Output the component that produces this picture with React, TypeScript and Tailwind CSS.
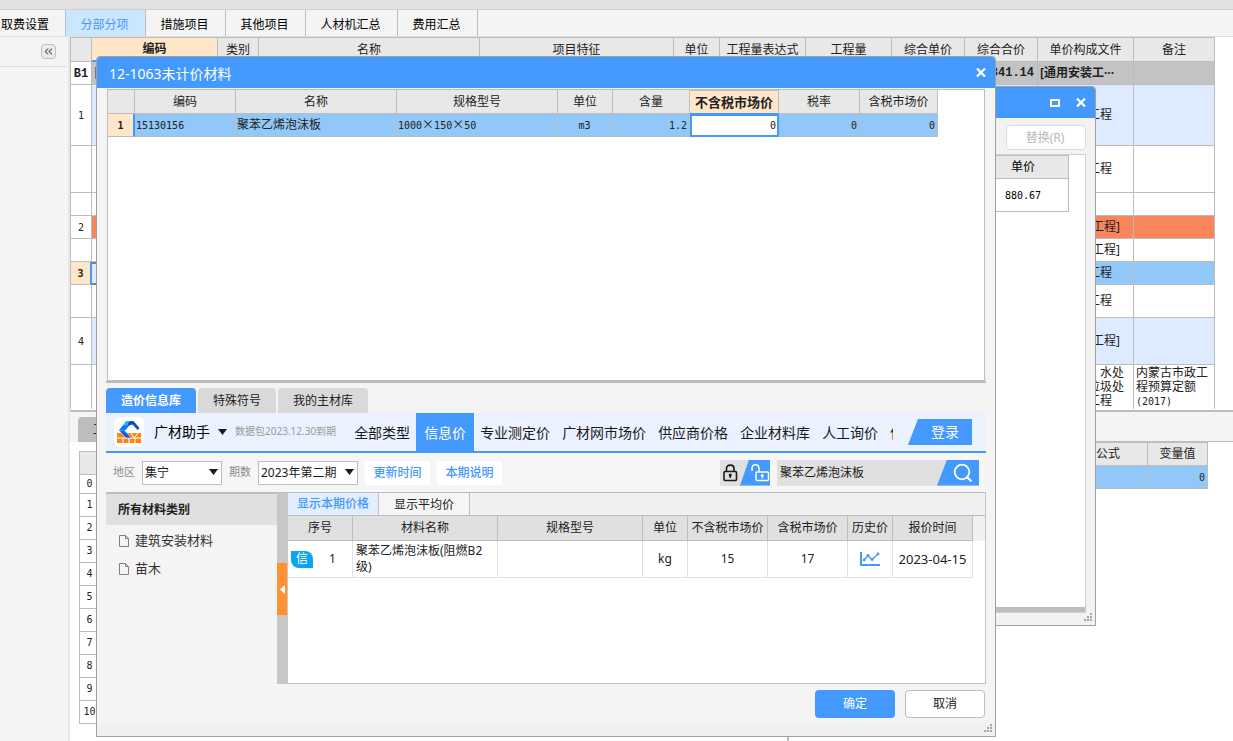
import React from "react";
import { ChevronsLeft } from "lucide-react";

const pageTabs = [
  { label: "分部分项", width: "w-20", active: true },
  { label: "措施项目", width: "w-20" },
  { label: "其他项目", width: "w-20" },
  { label: "人材机汇总", width: "w-[92px]" },
  { label: "费用汇总", width: "w-20" },
];

const mainColumns = [
  { label: "", width: "w-[21px]" },
  { label: "编码", width: "w-[126px]" },
  { label: "类别", width: "w-[41px]" },
  { label: "名称", width: "w-[221px]" },
  { label: "项目特征", width: "w-[194px]" },
  { label: "单位", width: "w-[46px]" },
  { label: "工程量表达式", width: "w-[86px]" },
  { label: "工程量", width: "w-[86px]" },
  { label: "综合单价", width: "w-[73px]" },
  { label: "综合合价", width: "w-[73px]" },
  { label: "单价构成文件", width: "w-[96px]" },
  { label: "备注", width: "w-[81px]" },
];

type MainRow = {
  no: string;
  height: string;
  fill: string;
  file?: React.ReactNode;
  note?: React.ReactNode;
  kind?: "total" | "current" | "last";
};

const mainRows: MainRow[] = [
  { no: "B1", height: "h-[23px]", fill: "bg-[#c3c3c3]", file: "[通用安装工···", kind: "total" },
  { no: "1", height: "h-[61px]", fill: "bg-[#deeaff]", file: "通用安装工程" },
  { no: "", height: "h-[47px]", fill: "bg-white", file: "通用安装工程" },
  { no: "", height: "h-[23px]", fill: "bg-white" },
  { no: "2", height: "h-[23px]", fill: "bg-[#f9855b]", file: "[通用安装工程]" },
  { no: "", height: "h-[23px]", fill: "bg-white", file: "[通用安装工程]" },
  { no: "3", height: "h-[23px]", fill: "bg-[#92c8f7]", file: "通用安装工程", kind: "current" },
  { no: "", height: "h-[33px]", fill: "bg-white", file: "通用安装工程" },
  { no: "4", height: "h-[47px]", fill: "bg-[#deeaff]", file: "[通用安装工程]" },
  {
    no: "",
    height: "h-[44px]",
    fill: "bg-white",
    file: (
      <>
        给水厂站、水处
        <br />
        理、生活垃圾处
        <br />
        理设施等工程
      </>
    ),
    note: (
      <>
        内蒙古市政工
        <br />
        程预算定额
        <br />
        <Num>(2017)</Num>
      </>
    ),
    kind: "last",
  },
];

const lineCounter = ["0", "1", "2", "3", "4", "5", "6", "7", "8", "9", "10"];

const priceNav = [
  "全部类型",
  "信息价",
  "专业测定价",
  "广材网市场价",
  "供应商价格",
  "企业材料库",
  "人工询价",
  "供",
];

function Num({ children }: { children: React.ReactNode }) {
  return <span className="font-['DejaVu_Sans_Mono',monospace] text-[10px]">{children}</span>;
}

function Times() {
  return <span className="font-['Noto_Sans_CJK_SC',sans-serif]">×</span>;
}

function CloseIcon() {
  return (
    <svg width="10" height="9" viewBox="0 0 10 9" aria-hidden="true">
      <path d="M1 0.5L9 8.5M9 0.5L1 8.5" stroke="#fff" strokeWidth="2.2" />
    </svg>
  );
}

function Grip() {
  return (
    <svg className="absolute right-[3px] bottom-1" width="8" height="8" viewBox="0 0 8 8" aria-hidden="true">
      <g fill="#a6a6a6">
        <rect x="6" y="0" width="2" height="2" />
        <rect x="3" y="3" width="2" height="2" />
        <rect x="6" y="3" width="2" height="2" />
        <rect x="0" y="6" width="2" height="2" />
        <rect x="3" y="6" width="2" height="2" />
        <rect x="6" y="6" width="2" height="2" />
      </g>
    </svg>
  );
}

function DownArrow() {
  return (
    <svg width="9" height="6" viewBox="0 0 9 6" aria-hidden="true">
      <path d="M0 0H9L4.5 6Z" fill="#1a1a1a" />
    </svg>
  );
}

function DropDown({ id, value, width }: { id: string; value: string; width: string }) {
  return (
    <div className={`relative h-6 ${width}`}>
      <select
        id={id}
        defaultValue={value}
        className="h-full w-full appearance-none border border-[#bdbdbd] bg-white pl-0.5 text-xs text-[#1a1a1a]"
      >
        <option>{value}</option>
      </select>
      <span className="pointer-events-none absolute top-0 right-1 flex h-full items-center pb-0.5">
        <DownArrow />
      </span>
    </div>
  );
}

function MainTable() {
  return (
    <table className="w-[1145px] table-fixed border-separate border-spacing-0 border-t border-l border-[#bdbdbd] text-xs leading-[14px] text-[#222]">
      <thead>
        <tr className="h-6">
          {mainColumns.map((c, i) => (
            <th
              key={i}
              className={`border-r border-[#bdbdbd] p-0 ${c.width} ${
                i === 1
                  ? "border-b-2 border-b-[#4499ff] bg-[#ffe6c8] font-bold"
                  : "border-b border-b-[#bdbdbd] bg-[#e8e8e8] font-normal"
              }`}
            >
              {c.label}
            </th>
          ))}
        </tr>
      </thead>
      <tbody>
        {mainRows.map((r, ri) => {
          const line = r.kind === "last" ? "border-r border-[#bdbdbd]" : "border-r border-b border-[#bdbdbd]";
          return (
            <tr key={ri} className={r.height}>
              <td
                className={`p-0 text-center ${line} ${
                  r.kind === "current" ? "border-r-2 border-r-[#4499ff] bg-[#ffe6c8] font-bold" : "bg-white"
                }`}
              >
                {r.kind === "total" ? (
                  <span className="font-['Liberation_Mono',monospace] font-bold">{r.no}</span>
                ) : (
                  <Num>{r.no}</Num>
                )}
              </td>
              <td
                className={`p-0 pl-[3px] ${
                  r.kind === "current" ? "border-y-2 border-[#808080] bg-[#deeaff]" : `${line} ${r.fill}`
                }`}
              >
                {r.kind === "total" && <span className="block size-3 border border-[#777] bg-white" />}
              </td>
              {mainColumns.slice(2, 9).map((_, i) => (
                <td key={i} className={`p-0 ${line} ${r.fill}`} />
              ))}
              <td
                className={`overflow-hidden p-0 pr-[3px] text-right font-['Liberation_Mono',monospace] font-bold ${line} ${r.fill}`}
              >
                {r.kind === "total" ? "66841.14" : ""}
              </td>
              <td
                className={`p-0 pl-0.5 whitespace-nowrap ${line} ${r.fill} ${
                  r.kind === "total" ? "overflow-hidden font-bold" : ""
                }`}
              >
                {r.file}
              </td>
              <td className={`p-0 pl-0.5 whitespace-nowrap ${line} ${r.fill}`}>{r.note}</td>
            </tr>
          );
        })}
      </tbody>
    </table>
  );
}

function LowerPanels() {
  return (
    <div className="flex flex-1 border-t-2 border-[#bdbdbd] text-xs text-[#222]">
      <section className="flex w-[717px] shrink-0 flex-col">
        <div className="flex h-[30px] items-end bg-[#f4f4f4] pl-2">
          <button className="h-[25px] w-[90px] rounded-t-sm bg-[#bdbdbd] pl-[15px] text-left">工料机显示</button>
        </div>
        <table className="mt-[9px] ml-[9px] w-[600px] table-fixed border-separate border-spacing-0 border-t border-l border-[#bdbdbd]">
          <thead>
            <tr className="h-[23px]">
              <th className="w-5 border-r border-b border-[#bdbdbd] bg-[#e8e8e8] p-0" />
              <th className="border-r border-b border-[#bdbdbd] bg-[#e8e8e8] p-0" />
            </tr>
          </thead>
          <tbody>
            {lineCounter.map((n, i) => (
              <tr key={n} className={i === 0 ? "h-[19px] leading-[14px]" : "h-[23px] leading-[14px]"}>
                <td className="border-r border-b border-[#bdbdbd] p-0 text-center font-['DejaVu_Sans_Mono',monospace] text-[10px]">
                  {n}
                </td>
                <td className="border-r border-b border-[#bdbdbd] p-0" />
              </tr>
            ))}
          </tbody>
        </table>
      </section>
      <section className="flex flex-1 flex-col border-l-2 border-[#bdbdbd]">
        <div className="h-[30px] border-b border-[#bdbdbd] bg-[#f4f4f4]" />
        <table className="w-[419px] table-fixed border-separate border-spacing-0 border-t border-[#bdbdbd]">
          <thead>
            <tr className="h-[23px]">
              <th className="border-r border-b border-[#bdbdbd] bg-[#e8e8e8] p-0" />
              <th className="w-[79px] border-r border-b border-[#bdbdbd] bg-[#e8e8e8] p-0 font-normal">公式</th>
              <th className="w-[60px] border-r border-b border-[#bdbdbd] bg-[#e8e8e8] p-0 font-normal">变量值</th>
            </tr>
          </thead>
          <tbody>
            <tr className="h-[23px] leading-[14px]">
              <td className="border-r border-b border-[#bdbdbd] bg-[#92c8f7] p-0" />
              <td className="border-r border-b border-[#bdbdbd] bg-[#92c8f7] p-0" />
              <td className="border-r border-b border-[#bdbdbd] bg-[#92c8f7] p-0 pr-0.5 text-right">
                <Num>0</Num>
              </td>
            </tr>
          </tbody>
        </table>
      </section>
    </div>
  );
}

function ReplaceDialog() {
  return (
    <div
      role="dialog"
      aria-label="替换"
      className="absolute top-[86px] right-[137px] flex h-[540px] w-[500px] flex-col overflow-hidden rounded-t border border-[#a0a0a0] bg-[#f2f2f2]"
    >
      <div className="flex h-[31px] shrink-0 items-center justify-end gap-4 bg-[#4499ff] pr-[9px]">
        <button aria-label="最大化">
          <span className="block h-2 w-2.5 border-2 border-white" />
        </button>
        <button aria-label="关闭">
          <CloseIcon />
        </button>
      </div>
      <div className="flex justify-end pt-[7px] pr-[9px] pb-1">
        <button className="h-[25px] w-20 rounded-sm border border-[#dcdcdc] bg-white pr-0.5 text-xs text-[#b8b8b8]">
          替换(R)
        </button>
      </div>
      <div className="mr-[9px] flex flex-1 flex-col border border-[#d0d0d0] bg-white">
        <table className="mr-4 ml-auto w-[460px] table-fixed border-separate border-spacing-0 border-t border-[#bdbdbd] text-xs text-black">
          <thead>
            <tr className="h-[23px]">
              <th className="border-r border-b border-[#bdbdbd] bg-[#e8e8e8] p-0" />
              <th className="w-[91px] border-r border-b border-[#bdbdbd] bg-[#e8e8e8] p-0 font-normal">单价</th>
            </tr>
          </thead>
          <tbody>
            <tr className="h-[33px] leading-[14px]">
              <td className="border-r border-b border-[#bdbdbd] p-0" />
              <td className="border-r border-b border-[#bdbdbd] p-0 text-center">
                <Num>880.67</Num>
              </td>
            </tr>
          </tbody>
        </table>
        <div className="mt-auto h-[5px] bg-[#bdbdbd]" />
      </div>
      <div className="h-3 shrink-0" />
      <Grip />
    </div>
  );
}

function MaterialTable() {
  const head = "border-r border-b border-[#bdbdbd] bg-[#e8e8e8] p-0 font-normal";
  const cell = "border-r border-b border-[#bdbdbd] bg-[#92c8f7] py-0 pr-0.5 pl-px";
  return (
    <table className="w-[830px] table-fixed border-separate border-spacing-0 text-xs leading-[14px] text-[#222]">
      <thead>
        <tr className="h-6">
          <th className={`w-[27px] ${head}`} />
          <th className={`w-[101px] ${head}`}>编码</th>
          <th className={`w-[161px] ${head}`}>名称</th>
          <th className={`w-[161px] ${head}`}>规格型号</th>
          <th className={`w-[55px] ${head}`}>单位</th>
          <th className={`w-[77px] ${head}`}>含量</th>
          <th className="w-[89px] border-y border-r border-[#bdbdbd] border-b-[#4499ff] bg-[#ffe6c8] p-0 font-bold whitespace-nowrap">
            <span className="text-[13px]">不含税市场价</span>
          </th>
          <th className={`w-[81px] ${head}`}>税率</th>
          <th className={`w-[78px] ${head}`}>含税市场价</th>
        </tr>
      </thead>
      <tbody>
        <tr className="h-[23px]">
          <td className="border-r-2 border-b border-r-[#4499ff] border-b-[#bdbdbd] bg-[#ffe6c8] p-0 text-center font-bold">
            <Num>1</Num>
          </td>
          <td className={cell}>
            <Num>15130156</Num>
          </td>
          <td className={cell}>聚苯乙烯泡沫板</td>
          <td className={cell}>
            <Num>1000</Num>
            <Times />
            <Num>150</Num>
            <Times />
            <Num>50</Num>
          </td>
          <td className={`text-center ${cell}`}>
            <Num>m3</Num>
          </td>
          <td className={`text-right ${cell}`}>
            <Num>1.2</Num>
          </td>
          <td className="p-0">
            <input
              aria-label="不含税市场价"
              defaultValue="0"
              className="block h-[23px] w-full border-2 border-[#4499ff] bg-white pr-px text-right font-['DejaVu_Sans_Mono',monospace] text-[10px]"
            />
          </td>
          <td className={`text-right ${cell}`}>
            <Num>0</Num>
          </td>
          <td className={`text-right ${cell}`}>
            <Num>0</Num>
          </td>
        </tr>
      </tbody>
    </table>
  );
}

function AssistantLogo() {
  return (
    <span className="flex size-[30px] shrink-0 items-center justify-center rounded-md bg-white">
      <svg width="26" height="26" viewBox="0 0 26 26" aria-hidden="true">
        <path d="M1 14H25V24H1Z" fill="#ff8414" />
        <path d="M1 19H25M7 19V24M13 19V24M19 19V24M14.500 13.500L18.500 19L22.500 13.500" stroke="#fff" strokeWidth="1" fill="none" />
        <path d="M3 11.500L8.500 11.500L15.500 19H10Z" fill="#0a5cf0" stroke="#fff" strokeWidth="0.500" />
        <path d="M3 11.500L10 2H17.500L14 5.500L8.500 11.500Z" fill="#22bdf8" />
        <path d="M3 11.500L6.500 7L13 5.500L14 5.800L9 11.500Z" fill="#0d78fa" />
        <path d="M14 2H17.500L23.500 9L21.500 11L16.500 5.500L13 6.500L11.500 5Z" fill="#0d4fc4" />
      </svg>
    </span>
  );
}

function AssistantBar() {
  return (
    <div className="flex h-10 border-b-2 border-[#4499ff] bg-[#ebf1ff]">
      <div className="flex items-center pl-2">
        <AssistantLogo />
        <button className="ml-2.5 flex items-center gap-2 text-sm text-black">
          广材助手
          <DownArrow />
        </button>
        <span className="ml-2 text-[10px] whitespace-nowrap text-[#9a9a9a]">数据包2023.12.30到期</span>
      </div>
      <nav className="ml-3 flex min-w-0 flex-1 overflow-hidden">
        {priceNav.map((label) => (
          <a
            key={label}
            href="#"
            className={`flex shrink-0 items-center pt-0.5 text-sm ${
              label === "信息价" ? "bg-[#4499ff] px-2 text-white" : "px-1.5 text-[#1a1a1a]"
            }`}
          >
            {label}
          </a>
        ))}
      </nav>
      <button className="mt-1.5 mr-3.5 ml-[15px] h-[26px] w-16 shrink-0 bg-[#4499ff] pl-2.5 text-sm text-white [clip-path:polygon(10px_0,100%_0,100%_100%,0_100%)]">
        登录
      </button>
    </div>
  );
}

function FilterBar() {
  return (
    <div className="flex h-10 items-center border-b border-[#bdbdbd] bg-[#f6f6f6] pl-[7px] text-xs">
      <label htmlFor="region" className="mr-[7px] text-[11px] text-[#8c8c8c]">
        地区
      </label>
      <DropDown id="region" value="集宁" width="w-20" />
      <label htmlFor="period" className="mr-[7px] ml-[7px] text-[11px] text-[#8c8c8c]">
        期数
      </label>
      <DropDown id="period" value="2023年第二期" width="w-[100px]" />
      <button className="ml-[7px] h-6 w-[65px] bg-white font-medium text-[#4499ff]">更新时间</button>
      <button className="ml-[7px] h-6 w-[65px] bg-white font-medium text-[#4499ff]">本期说明</button>
      <div className="ml-auto flex h-[26px] w-[50px] bg-[#e0e0e0]">
        <button aria-label="锁定" className="flex w-5 items-center justify-center">
          <svg width="16" height="18" viewBox="0 0 16 18" aria-hidden="true">
            <rect x="2" y="7.500" width="12.500" height="9" rx="1" fill="none" stroke="#1a1a1a" strokeWidth="1.600" />
            <path d="M4.500 7.500V4.500C4.500 0 12 0 12 4.500V7.500" fill="none" stroke="#1a1a1a" strokeWidth="1.600" />
            <circle cx="8.250" cy="11" r="1.600" fill="#1a1a1a" />
            <path d="M8.250 11V14" stroke="#1a1a1a" strokeWidth="1.400" />
          </svg>
        </button>
        <button
          aria-label="解锁"
          className="flex w-[30px] items-center justify-end bg-[#4499ff] [clip-path:polygon(9px_0,100%_0,100%_100%,0_100%)]"
        >
          <svg width="20" height="20" viewBox="0 0 20 20" aria-hidden="true">
            <rect x="6" y="9" width="12.500" height="8.500" rx="1" fill="none" stroke="#fff" strokeWidth="1.500" />
            <path d="M2 8V5.500C2 0.500 9 0.500 9 5.500V9" fill="none" stroke="#fff" strokeWidth="1.500" />
            <circle cx="12.250" cy="12.500" r="1.500" fill="#fff" />
            <path d="M12.250 12.500V15.500" stroke="#fff" strokeWidth="1.200" />
          </svg>
        </button>
      </div>
      <div className="mr-[7px] ml-[7px] flex h-[26px] w-[202px] bg-[#e0e0e0]">
        <input
          aria-label="搜索材料"
          defaultValue="聚苯乙烯泡沫板"
          className="min-w-0 flex-1 bg-transparent pl-[3px] text-xs text-[#1a1a1a]"
        />
        <button
          aria-label="搜索"
          className="flex w-[42px] items-center justify-center bg-[#4499ff] pl-2.5 [clip-path:polygon(10px_0,100%_0,100%_100%,0_100%)]"
        >
          <svg width="20" height="20" viewBox="0 0 20 20" aria-hidden="true">
            <circle cx="9" cy="9" r="7.300" fill="none" stroke="#fff" strokeWidth="1.800" />
            <path d="M14 14L18.500 18.500" stroke="#fff" strokeWidth="2" />
          </svg>
        </button>
      </div>
    </div>
  );
}

function FileItem({ label }: { label: string }) {
  return (
    <li>
      <a href="#" className="flex h-7 items-center gap-1.5 pl-[13px] text-[13px] text-[#333]">
        <svg width="10" height="12" viewBox="0 0 10 12" aria-hidden="true">
          <path d="M0.500 0.500H6.500L9.500 3.500V11.500H0.500ZM6.500 0.500V3.500H9.500" fill="none" stroke="#808080" />
        </svg>
        {label}
      </a>
    </li>
  );
}

function PriceTable() {
  const head = "border-r border-b border-[#bdbdbd] bg-[#e0e0e0] p-0 font-normal whitespace-nowrap";
  const cell = "border-r border-b border-[#e2e2e2] p-0 text-center";
  return (
    <div className="bg-[linear-gradient(#f0f0f0_25px,transparent_25px)]">
      <table className="w-[685px] table-fixed border-separate border-spacing-0 text-xs leading-4 text-[#222]">
        <thead>
          <tr className="h-[25px]">
            <th className={`w-[65px] ${head}`}>序号</th>
            <th className={`w-[145px] ${head}`}>材料名称</th>
            <th className={`w-[145px] ${head}`}>规格型号</th>
            <th className={`w-[45px] ${head}`}>单位</th>
            <th className={`w-20 ${head}`}>不含税市场价</th>
            <th className={`w-20 ${head}`}>含税市场价</th>
            <th className={`w-[45px] ${head}`}>历史价</th>
            <th className={`w-20 ${head}`}>报价时间</th>
          </tr>
        </thead>
        <tbody>
          <tr className="h-[37px]">
            <td className={cell}>
              <div className="flex items-center gap-4 pl-[3px]">
                <span className="flex h-[17px] w-[22px] items-center justify-center rounded-tr-lg rounded-bl-lg bg-[#0aa5ec] text-xs text-white">
                  信
                </span>
                1
              </div>
            </td>
            <td className="border-r border-b border-[#e2e2e2] py-0 pr-2 pl-[3px]">聚苯乙烯泡沫板(阻燃B2级)</td>
            <td className={cell} />
            <td className={cell}>kg</td>
            <td className={cell}>15</td>
            <td className={cell}>17</td>
            <td className={cell}>
              <button aria-label="历史价" className="block w-full">
                <svg className="mx-auto" width="20" height="16" viewBox="0 0 20 16" aria-hidden="true">
                  <path d="M1 1V14H20" fill="none" stroke="#4499ff" strokeWidth="2" />
                  <path d="M4 9L8 4.500L12 8.500L18 3" fill="none" stroke="#4499ff" strokeWidth="1.500" />
                  <g fill="#4499ff">
                    <circle cx="4.200" cy="9" r="1.400" />
                    <circle cx="8" cy="4.500" r="1.400" />
                    <circle cx="12" cy="8.500" r="1.400" />
                    <circle cx="18" cy="3" r="1.400" />
                  </g>
                </svg>
              </button>
            </td>
            <td className={`text-[13px] whitespace-nowrap ${cell}`}>2023-04-15</td>
          </tr>
        </tbody>
      </table>
    </div>
  );
}

function MaterialDialog() {
  return (
    <div
      role="dialog"
      aria-label="12-1063未计价材料"
      className="absolute top-[56px] right-[237px] left-[96px] overflow-hidden rounded-t border border-[#a0a0a0] bg-[#f4f4f4]"
    >
      <div className="flex h-[31px] items-center justify-between bg-[#4499ff] pr-[9px] pl-3 text-sm text-white">
        <h1 className="pt-0.5">12-1063未计价材料</h1>
        <button aria-label="关闭">
          <CloseIcon />
        </button>
      </div>
      <div className="px-[9px] pt-px">
        <div className="mx-px h-[292px] border border-[#bdbdbd] bg-white">
          <MaterialTable />
        </div>
        <div className="flex h-8 items-end gap-0.5 border-t-2 border-[#bdbdbd] text-xs">
          <button className="h-[25px] w-[90px] rounded-t-sm bg-[#4499ff] font-bold text-white">造价信息库</button>
          <button className="h-[25px] w-[78px] rounded-t-sm bg-[#d9d9d9] text-[#222]">特殊符号</button>
          <button className="h-[25px] w-[90px] rounded-t-sm bg-[#d9d9d9] text-[#222]">我的主材库</button>
        </div>
        <AssistantBar />
        <FilterBar />
        <div className="flex h-[191px]">
          <aside className="w-[171px] shrink-0">
            <h2 className="mb-0.5 flex h-8 items-center border-t border-[#bdbdbd] bg-[#e0e0e0] pl-3 text-xs font-bold text-[#222]">
              所有材料类别
            </h2>
            <ul>
              <FileItem label="建筑安装材料" />
              <FileItem label="苗木" />
            </ul>
          </aside>
          <div className="flex w-[11px] shrink-0 flex-col bg-[#c8c7c5] pt-[70px]">
            <button aria-label="收起" className="flex h-[52px] w-2.5 items-center justify-center bg-[#ff9033]">
              <svg width="5" height="9" viewBox="0 0 5 9" aria-hidden="true">
                <path d="M5 0V9L0 4.500Z" fill="#fff" />
              </svg>
            </button>
          </div>
          <section className="flex min-w-0 flex-1 flex-col border-r border-b border-[#c4c4c4] bg-white">
            <div className="flex h-[23px] border-b border-[#bdbdbd] bg-[#f0f0f0] text-xs">
              <button className="w-[91px] border-r border-[#bdbdbd] bg-[#e2eefe] font-medium text-[#4499ff]">
                显示本期价格
              </button>
              <button className="w-[91px] border-r border-[#bdbdbd] bg-[#f6f6f6] pt-0.5 text-[#222]">显示平均价</button>
            </div>
            <PriceTable />
          </section>
        </div>
        <div className="flex h-10 items-center justify-end gap-2.5 pr-px text-xs">
          <button className="h-7 w-20 rounded-sm bg-[#4499ff] text-white">确定</button>
          <button className="h-7 w-20 rounded-sm border border-[#bdbdbd] bg-white text-[#1a1a1a]">取消</button>
        </div>
      </div>
      <div className="h-3 bg-[#f0f0f0]" />
      <Grip />
    </div>
  );
}

export default function App() {
  return (
    <main className="relative flex h-screen flex-col overflow-hidden bg-white font-['Noto_Sans','Noto_Sans_CJK_SC',sans-serif] text-xs">
      <div className="h-2.5 shrink-0 border-b border-[#cfcfcf] bg-[#e1e1e1]" />
      <div className="flex h-[27px] shrink-0 border-b border-[#dcdcdc] bg-[#f4f4f4] text-black">
        <button className="w-[66px] border-r border-[#bdbdbd] pt-1 pl-px text-left whitespace-nowrap">取费设置</button>
        {pageTabs.map((t) => (
          <button
            key={t.label}
            className={`border-r border-[#bdbdbd] pt-1 pr-0.5 ${t.width} ${
              t.active ? "bg-[#cbe7ff] text-[#4499ff]" : ""
            }`}
          >
            {t.label}
          </button>
        ))}
      </div>
      <div className="flex min-h-0 flex-1">
        <aside className="w-[70px] shrink-0 border-r-2 border-[#e8e8e8] bg-[#f4f4f4]">
          <div className="mr-0.5 flex h-[30px] items-center justify-end border-b border-[#dcdcdc] pr-2.5">
            <button
              aria-label="折叠"
              className="flex size-[15px] items-center justify-center rounded-sm border border-[#bdbdbd] bg-[#ececec] text-[#666]"
            >
              <ChevronsLeft size={13} strokeWidth={2} />
            </button>
          </div>
        </aside>
        <div className="flex min-w-0 flex-1 flex-col">
          <div className="mb-px shrink-0">
            <MainTable />
          </div>
          <LowerPanels />
        </div>
      </div>
      <ReplaceDialog />
      <MaterialDialog />
    </main>
  );
}
